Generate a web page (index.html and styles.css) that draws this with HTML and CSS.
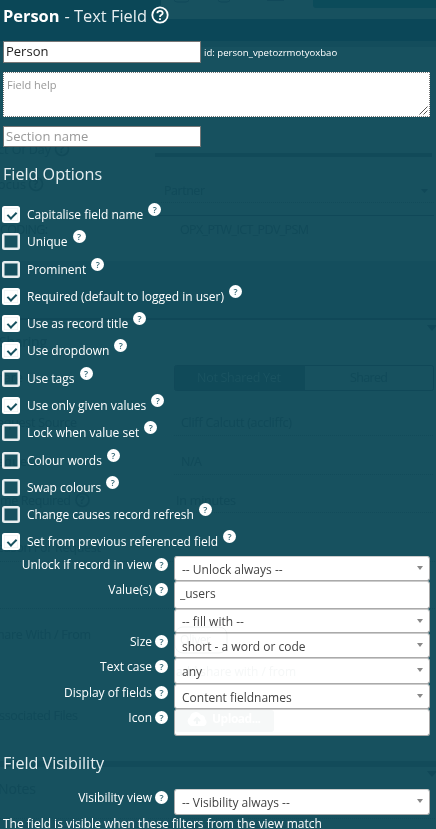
FILE: index.html
```
<!DOCTYPE html>
<html lang="en">
<head>
<meta charset="utf-8">
<title>Person - Text Field</title>
<link rel="stylesheet" href="styles.css">
</head>
<body>
<svg class="backdrop" width="436" height="829" aria-hidden="true">
  <rect width="161" height="19" fill="#0b4757"/>
  <rect x="313" y="-5" width="130" height="13" rx="3" fill="#0b4b5a"/>
  <rect x="174" y="-10" width="15" height="12" rx="3" fill="none" stroke="#11495a"/>
  <rect x="218" y="-10" width="12" height="12" rx="3" fill="none" stroke="#11495a"/>
  <rect x="267" y="-2" width="17" height="3" fill="#11495a"/>
  <rect y="19" width="436" height="22" fill="#0b4758"/>
  <rect y="41" width="436" height="6" fill="#134d5c"/>
  <rect x="155" y="153" width="277" height="4" fill="#114a59"/>
  <rect y="261" width="436" height="58" fill="#144e5d"/>
  <rect y="318" width="436" height="2" fill="#104858"/>
  <rect y="215" x="155" width="279" height="1" fill="#104858"/>
  <rect y="761" width="436" height="6" fill="#124b5a"/>
  <path d="M421 189h7l-3.500 4zM427 325h10l-5 6zM427 771h10l-5 6z" fill="#104858"/>
  <g stroke="#124b5a" stroke-dasharray="1 1"><path d="M155 202.500H434M174 435.500H434M174 474.500H434M174 512.500H434M0 561.500H436M0 608.500H436M0 818.500H436"/></g>
  <rect x="174.500" y="365.500" width="259" height="25" rx="2" fill="none" stroke="#104858"/>
  <rect x="175" y="366" width="130" height="24" fill="#104a59"/>
  <g class="ghost">
    <text x="-2" y="154" textLength="53">ct Of Day</text>
    <text x="-2" y="189" textLength="28">ocus</text>
    <text x="164" y="195" textLength="41">Partner</text>
    <text x="0" y="234" textLength="48">CODING:</text>
    <text x="180" y="234" textLength="129">OPX_PTW_ICT_PDV_PSM</text>
    <text class="ghost-head" x="-1" y="347" textLength="48">Sharing</text>
    <text x="-4" y="382" textLength="27">hare</text>
    <text x="197" y="382" textLength="84" class="ghost-light">Not Shared Yet</text>
    <text x="350" y="382" textLength="38">Shared</text>
    <text x="-3" y="427" textLength="80">equest Source</text>
    <text x="181" y="427" textLength="111">Cliff Calcutt (accliffc)</text>
    <text x="-3" y="466" textLength="41">equest</text>
    <text x="181" y="466" textLength="21">N/A</text>
    <text x="0" y="505" textLength="71">me Required</text>
    <text x="176" y="505" textLength="60">In minutes</text>
    <text x="-3" y="552" textLength="104">eason For Request</text>
    <text x="-3" y="639" textLength="94">hare With / From</text>
    <text x="-1" y="720" textLength="79">ssociated Files</text>
    <text class="ghost-head" x="-2" y="794" textLength="38">Notes</text>
  </g>
  <g class="ghost-help">
    <circle cx="62" cy="149" r="6.500"/><text x="59" y="153">?</text>
    <circle cx="36" cy="184" r="6.500"/><text x="33" y="188">?</text>
    <circle cx="82.500" cy="500" r="6.500"/><text x="79.500" y="504">?</text>
  </g>
</svg>

<main class="panel">
  <h1 class="title"><b>Person</b><span>- Text Field</span>
    <svg class="title-help" viewBox="0 0 18 18"><circle cx="9" cy="9" r="7.700"/><path d="M6.300 7.200Q6.500 4.800 9 4.800T11.700 7Q11.700 8.200 10.200 9.100Q9 9.800 9 10.900"/><path d="M9 12.300v1.800"/></svg>
  </h1>
  <div class="name-row"><div class="box">Person</div><small>id: person_vpetozrmotyoxbao</small></div>
  <div class="area">Field help
    <svg class="grip" viewBox="0 0 9 9"><path d="M.5 8.500l8-8M4.500 8.500l4-4"/></svg>
  </div>
  <div class="box section">Section name</div>

  <h2 class="heading">Field Options</h2>
  <ul class="options">
    <li><i class="check on"></i><span>Capitalise field name</span><i class="help">?</i></li>
    <li><i class="check"></i><span>Unique</span><i class="help">?</i></li>
    <li><i class="check"></i><span>Prominent</span><i class="help">?</i></li>
    <li><i class="check on"></i><span>Required (default to logged in user)</span><i class="help">?</i></li>
    <li><i class="check on"></i><span>Use as record title</span><i class="help">?</i></li>
    <li><i class="check on"></i><span>Use dropdown</span><i class="help">?</i></li>
    <li><i class="check"></i><span>Use tags</span><i class="help">?</i></li>
    <li><i class="check on"></i><span>Use only given values</span><i class="help">?</i></li>
    <li><i class="check"></i><span>Lock when value set</span><i class="help">?</i></li>
    <li><i class="check"></i><span>Colour words</span><i class="help">?</i></li>
    <li><i class="check"></i><span>Swap colours</span><i class="help">?</i></li>
    <li><i class="check"></i><span>Change causes record refresh</span><i class="help">?</i></li>
    <li><i class="check on"></i><span>Set from previous referenced field</span><i class="help">?</i></li>
  </ul>

  <div class="fields">
    <label>Unlock if record in view<i class="help">?</i></label><div class="control select">-- Unlock always --</div>
    <label>Value(s)<i class="help">?</i></label><div class="control text">_users</div>
    <label></label><div class="control select fill">-- fill with --</div>
    <label>Size<i class="help">?</i></label><div class="control select">short - a word or code</div>
    <label>Text case<i class="help">?</i></label><div class="control select">any</div>
    <label>Display of fields<i class="help">?</i></label><div class="control select">Content fieldnames</div>
    <label>Icon<i class="help">?</i></label>
    <div class="control upload">
      <svg viewBox="0 0 99 22"><rect width="99" height="22" rx="3" fill="#f6f8f8"/><path d="M16 16a5 5 0 0 1-1-9 6 6 0 0 1 11-2 4 4 0 0 1 4 4 4 4 0 0 1-1 7z" fill="#fff"/><path d="M22 14V8m-3 3 3-3 3 3" stroke="#f3f6f6" stroke-width="2" fill="none"/><text x="37" y="13" textLength="49">Upload...</text></svg>
    </div>
  </div>

  <h2 class="heading visibility">Field Visibility</h2>
  <div class="fields last">
    <label>Visibility view<i class="help">?</i></label><div class="control select">-- Visibility always --</div>
  </div>
  <p class="note">The field is visible when these filters from the view match</p>
</main>
<svg class="sheen" width="256" height="60" aria-hidden="true">
  <rect x="1" y="5" width="52" height="26" rx="8"/>
  <text x="6" y="22" textLength="31">Oliver</text>
  <text x="2" y="54" textLength="120">add share with / from</text>
</svg>
</body>
</html>
```
FILE: styles.css
```
* { box-sizing: border-box; }
body {
  margin: 0;
  width: 436px;
  height: 829px;
  overflow: hidden;
  position: relative;
  background: #17515f;
  color: #fff;
  font-family: "Open Sans", "Noto Sans", sans-serif;
  font-size: 12px;
}
.backdrop { position: absolute; top: 0; left: 0; }
.ghost text { fill: #114a59; font-size: 12.500px; }
.ghost .ghost-head { font-size: 14px; }
.ghost .ghost-light { fill: #1a5361; }
.ghost-help circle { fill: none; stroke: #114a59; stroke-width: 1.500; }
.ghost-help text { fill: #114a59; font-size: 11px; font-weight: 700; }
.sheen { position: absolute; left: 174px; top: 622px; pointer-events: none; }
.sheen rect { fill: none; stroke: #f3f5f5; }
.sheen text { fill: #f5f7f7; font-size: 12px; }
.sheen { mix-blend-mode: multiply; }

.panel { position: relative; height: 829px; padding-left: 3px; }
.title {
  display: flex;
  align-items: center;
  height: 30px;
  margin: 0;
  font-size: 16.400px;
  font-weight: 400;
  color: #e6eef0;
}
.title b { color: #fff; margin-right: 5px; }
.title-help { width: 18px; height: 18px; margin-left: 4px; fill: none; stroke: #fff; stroke-width: 1.800; }

.name-row { display: flex; align-items: center; height: 22px; margin-top: 11px; }
.name-row small { margin-left: 3px; font-size: 9.600px; font-weight: 500; }
.box {
  width: 198px;
  height: 22px;
  padding-left: 2px;
  border: 1px solid #777;
  background: #fff;
  color: #222;
  font-size: 13px;
  line-height: 19px;
}
.area {
  position: relative;
  width: 427px;
  height: 45px;
  margin-top: 9px;
  padding: 4px 3px;
  border: 1px dotted #777;
  background: #fff;
  color: #999;
  font-size: 11px;
  line-height: 16px;
}
.grip { position: absolute; right: 1px; bottom: 1px; width: 9px; height: 9px; stroke: #555; }
.section { height: 21px; margin-top: 9px; color: #999; }

.heading {
  margin: 17px 0 0;
  height: 20px;
  font-size: 16.150px;
  font-weight: 400;
  line-height: 20px;
  color: #e6eef0;
}
.options { list-style: none; margin: 17px 0 0; padding: 0; }
.options li { display: flex; align-items: center; height: 27.270px; font-weight: 500; }
.options .help { margin: 0 0 10px 5px; }
.check {
  position: relative;
  width: 18px;
  height: 17px;
  margin: 0 7px 0 -1px;
  border: 2.500px solid #e8eef0;
  box-shadow: inset 0 0 0 .5px #e8eef0;
  border-radius: 2.500px;
}
.check.on { background: #fff; border-color: #fff; }
.check.on::after {
  content: "";
  position: absolute;
  left: 5px;
  top: 2px;
  width: 4px;
  height: 7px;
  border: solid #17515f;
  border-width: 0 2px 2px 0;
  transform: rotate(45deg);
}
.help {
  flex: none;
  width: 13px;
  height: 13px;
  border-radius: 50%;
  background: #fff;
  color: #356775;
  font-size: 9px;
  font-weight: 600;
  font-style: normal;
  line-height: 13px;
  text-align: center;
}
.fields {
  display: grid;
  grid-template-columns: 165px 256px;
  column-gap: 6px;
  grid-template-rows: 25px 28px 24px 25px 26px 25px 27px;
  margin-top: 1px;
}
.fields label {
  display: flex;
  justify-content: flex-end;
  align-items: flex-start;
  gap: 3px;
  padding-top: 2px;
  font-weight: 500;
  line-height: 14px;
}
.control {
  position: relative;
  padding-left: 7px;
  border: 1px solid #aaa;
  border-top-color: #ccc;
  border-radius: 3px;
  background: #fff;
  color: #444;
  line-height: 26px;
}
.control.text { padding-left: 5px; line-height: 24px; }
.control.fill { line-height: 24px; }
.select::after {
  content: "";
  position: absolute;
  right: 6px;
  top: 9px;
  border: 3px solid transparent;
  border-top: 4px solid #888;
  border-bottom: 0;
}
.upload { padding: 0; }
.upload svg { display: block; width: 99px; height: 22px; }
.upload text { fill: #fff; font-size: 12px; font-weight: 700; }
.visibility { margin-top: 17px; }
.fields.last { grid-template-rows: 26px; margin-top: 16px; }
.note { margin: 0; font-weight: 500; line-height: 18px; white-space: nowrap; }
```
